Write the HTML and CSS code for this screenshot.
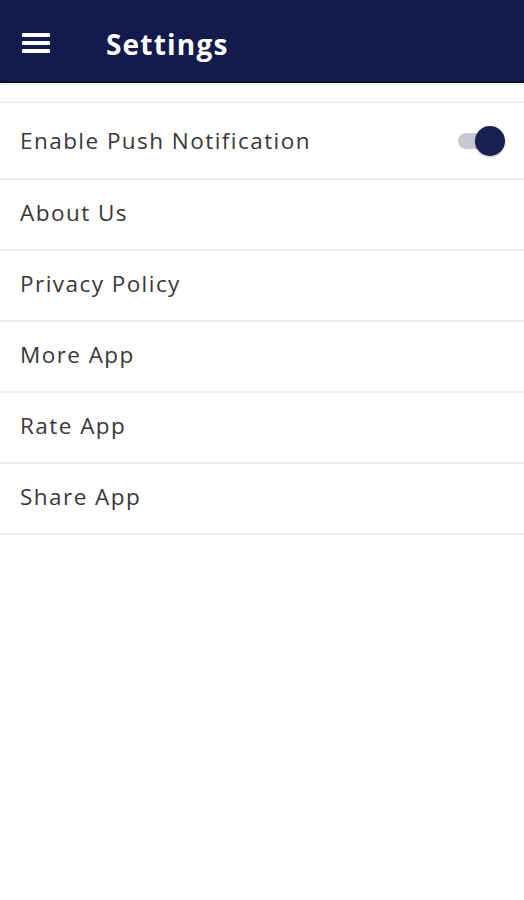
FILE: index.html
```html
<!DOCTYPE html>
<html lang="en">
<head>
    <meta charset="UTF-8">
    <meta name="viewport" content="width=device-width, initial-scale=1.0">
    <title>Settings</title>
    <link rel="stylesheet" href="styles.css">
</head>
<body>
    <header class="app-bar">
        <span class="menu-icon">
            <span></span>
            <span></span>
            <span></span>
        </span>
        <h1>Settings</h1>
    </header>

    <main>
        <ul class="settings-list">
            <li class="settings-item toggle-row">
                <span>Enable Push Notification</span>
                <span class="switch"><span class="knob"></span></span>
            </li>
            <li class="settings-item">About Us</li>
            <li class="settings-item">Privacy Policy</li>
            <li class="settings-item">More App</li>
            <li class="settings-item">Rate App</li>
            <li class="settings-item">Share App</li>
        </ul>
    </main>
</body>
</html>
```

FILE: styles.css
```css
body {
    font-family: "Open Sans", sans-serif;
    margin: 0;
    padding: 0;
    background-color: #fff;
}

.app-bar {
    height: 81px;
    background-color: #131b4e;
    border-bottom: 2px solid #0a0f33;
    box-shadow: 0 1px 3px rgba(0, 0, 0, 0.15);
    display: flex;
    align-items: center;
    padding: 0 22px;
}

.menu-icon {
    display: flex;
    flex-direction: column;
    gap: 4px;
    width: 28px;
    margin-top: 4px;
}

.menu-icon span {
    height: 4px;
    background-color: #fff;
    border-radius: 1px;
}

.app-bar h1 {
    color: #fff;
    font-size: 28px;
    font-weight: 700;
    margin: 6px 0 0 56px;
    letter-spacing: 1.2px;
}

main {
    padding-top: 18px;
}

.settings-list {
    list-style: none;
    margin: 0;
    padding: 0;
    border-top: 2px solid #efefef;
}

.settings-item {
    height: 69px;
    border-bottom: 2px solid #ececec;
    display: flex;
    align-items: center;
    padding: 0 20px;
    font-size: 22.5px;
    color: #383838;
    letter-spacing: 1.45px;
}

.settings-item + .settings-item {
    padding-bottom: 4px;
    height: 65px;
}

.toggle-row {
    height: 75px;
    justify-content: space-between;
}

.switch {
    position: relative;
    width: 42px;
    height: 16px;
    border-radius: 8px;
    background-color: #c5c8d0;
    margin-right: 4px;
}

.knob {
    position: absolute;
    right: -5px;
    top: -7px;
    width: 30px;
    height: 30px;
    border-radius: 50%;
    background-color: #18204f;
    box-shadow: 0 1px 2px rgba(0, 0, 0, 0.3);
}
```
